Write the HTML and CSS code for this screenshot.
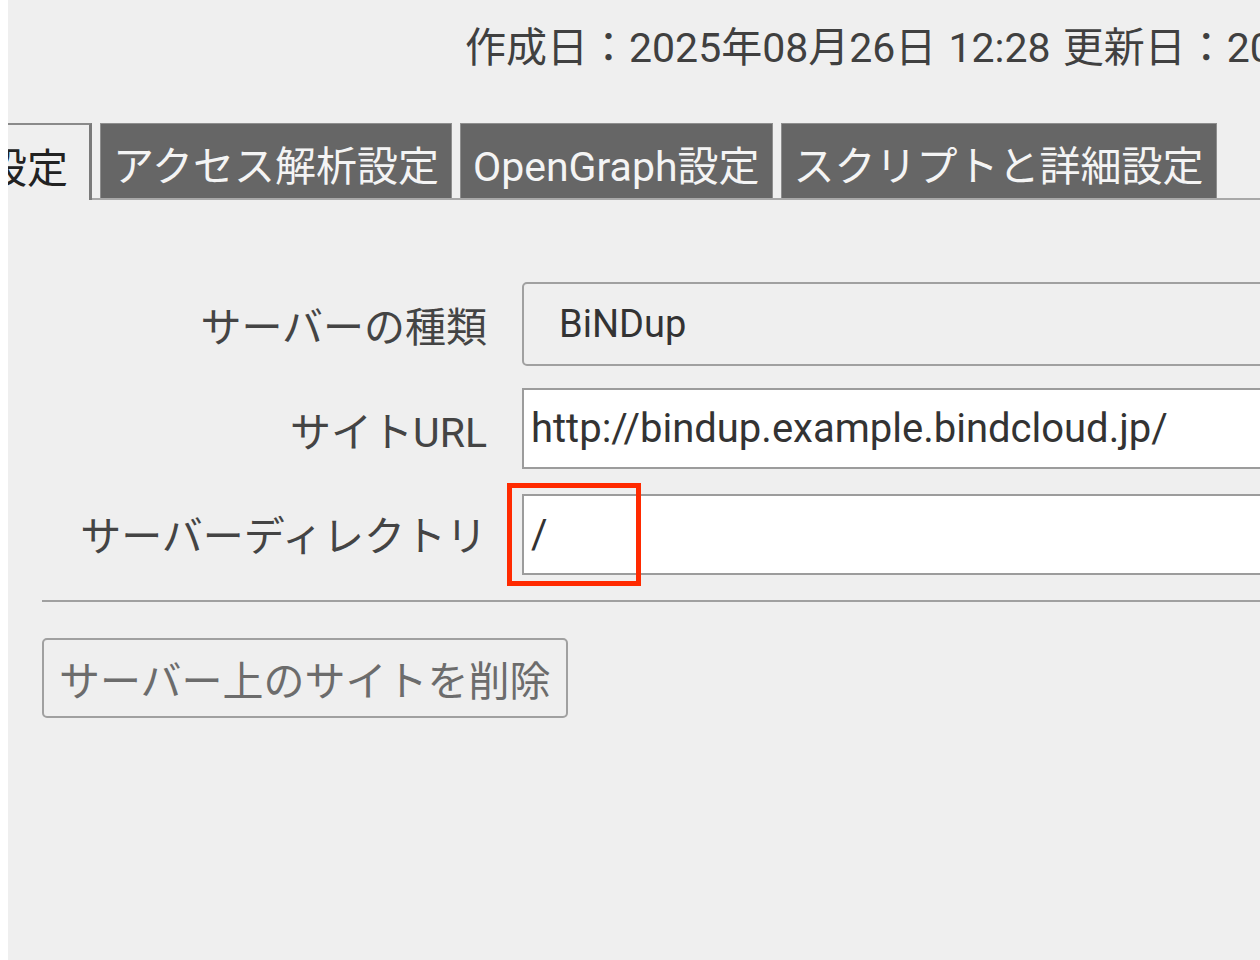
FILE: index.html
```html
<!DOCTYPE html>
<html lang="ja">
<head>
<meta charset="utf-8">
<title>サーバー設定</title>
<link rel="stylesheet" href="styles.css">
</head>
<body>
<div class="panel">
  <div class="meta">作成日：2025年08月26日 12:28 更新日：2025年08月26日 12:28</div>
  <div class="tabs">
    <div class="tab tab-active">基本設定</div>
    <div class="tab">アクセス解析設定</div>
    <div class="tab">OpenGraph設定</div>
    <div class="tab">スクリプトと詳細設定</div>
  </div>
  <div class="content">
    <div class="form">
      <div class="label">サーバーの種類</div>
      <div class="field"><div class="select">BiNDup</div></div>
      <div class="label">サイトURL</div>
      <div class="field"><div class="input">http://bindup.example.bindcloud.jp/</div></div>
      <div class="label">サーバーディレクトリ</div>
      <div class="field field-marked"><div class="input input-dir">/</div><div class="highlight"></div></div>
    </div>
    <div class="rule"></div>
    <div class="actions"><div class="button">サーバー上のサイトを削除</div></div>
  </div>
</div>
</body>
</html>
```
FILE: styles.css
```css
html, body {
  margin: 0;
  padding: 0;
  overflow: hidden;
  background: #ffffff;
}
body {
  font-family: Roboto, "Noto Sans CJK JP", "Noto Sans", sans-serif;
  font-size: 41px;
}
.panel {
  margin-left: 8px;
  height: 960px;
  background: #efefef;
  overflow: hidden;
}
.meta {
  padding-top: 20px;
  padding-left: 457px;
  height: 56px;
  line-height: 56px;
  font-size: 41px;
  word-spacing: 2px;
  color: #404040;
  white-space: nowrap;
}
.tabs {
  margin-top: 47px;
  margin-left: -118px;
  width: 1500px;
  display: flex;
  align-items: flex-end;
  gap: 8px;
  border-bottom: 2px solid #a8a8a8;
  height: 75px;
}
.tab {
  height: 75px;
  box-sizing: border-box;
  display: flex;
  align-items: center;
  padding: 4px 12px 0 12px;
  white-space: nowrap;
  background: #666666;
  color: #f4f4f4;
  border: 1px solid #8e8e8e;
  border-bottom: none;
}
.tab-active {
  background: #efefef;
  color: #222222;
  border-top: 2px solid #8a8a8a;
  border-left: 2px solid #8a8a8a;
  border-right: 3px solid #7a7a7a;
  padding-right: 21px;
  height: 77px;
  margin-bottom: -2px;
}
.content {
  width: 1500px;
  padding-left: 34px;
  padding-top: 82px;
}
.form {
  display: grid;
  grid-template-columns: 445px 1fr;
  column-gap: 35px;
  row-gap: 22px;
  align-items: center;
}
.label {
  text-align: right;
  color: #444444;
  white-space: nowrap;
}
.field {
  position: relative;
}
.select {
  height: 84px;
  box-sizing: border-box;
  border: 2px solid #a0a0a0;
  border-radius: 5px;
  background: #efefef;
  font-size: 38px;
  color: #333333;
  padding-left: 35px;
  display: flex;
  align-items: center;
}
.input {
  height: 81px;
  box-sizing: border-box;
  border: 2px solid #9c9c9c;
  background: #ffffff;
  font-size: 40px;
  color: #333333;
  padding-left: 7px;
  display: flex;
  align-items: center;
}
.field-marked {
  margin-top: 3px;
}
.highlight {
  position: absolute;
  left: -15px;
  top: -11px;
  width: 134px;
  height: 103px;
  box-sizing: border-box;
  border: 5px solid #ff2a00;
}
.rule {
  margin-top: 25px;
  height: 2px;
  background: #a0a0a0;
}
.actions {
  margin-top: 36px;
  display: flex;
}
.button {
  height: 80px;
  box-sizing: border-box;
  border: 2px solid #a0a0a0;
  border-radius: 5px;
  background: #efefef;
  padding: 0 15px;
  color: #6c6c6c;
  display: flex;
  align-items: center;
  white-space: nowrap;
}
```
